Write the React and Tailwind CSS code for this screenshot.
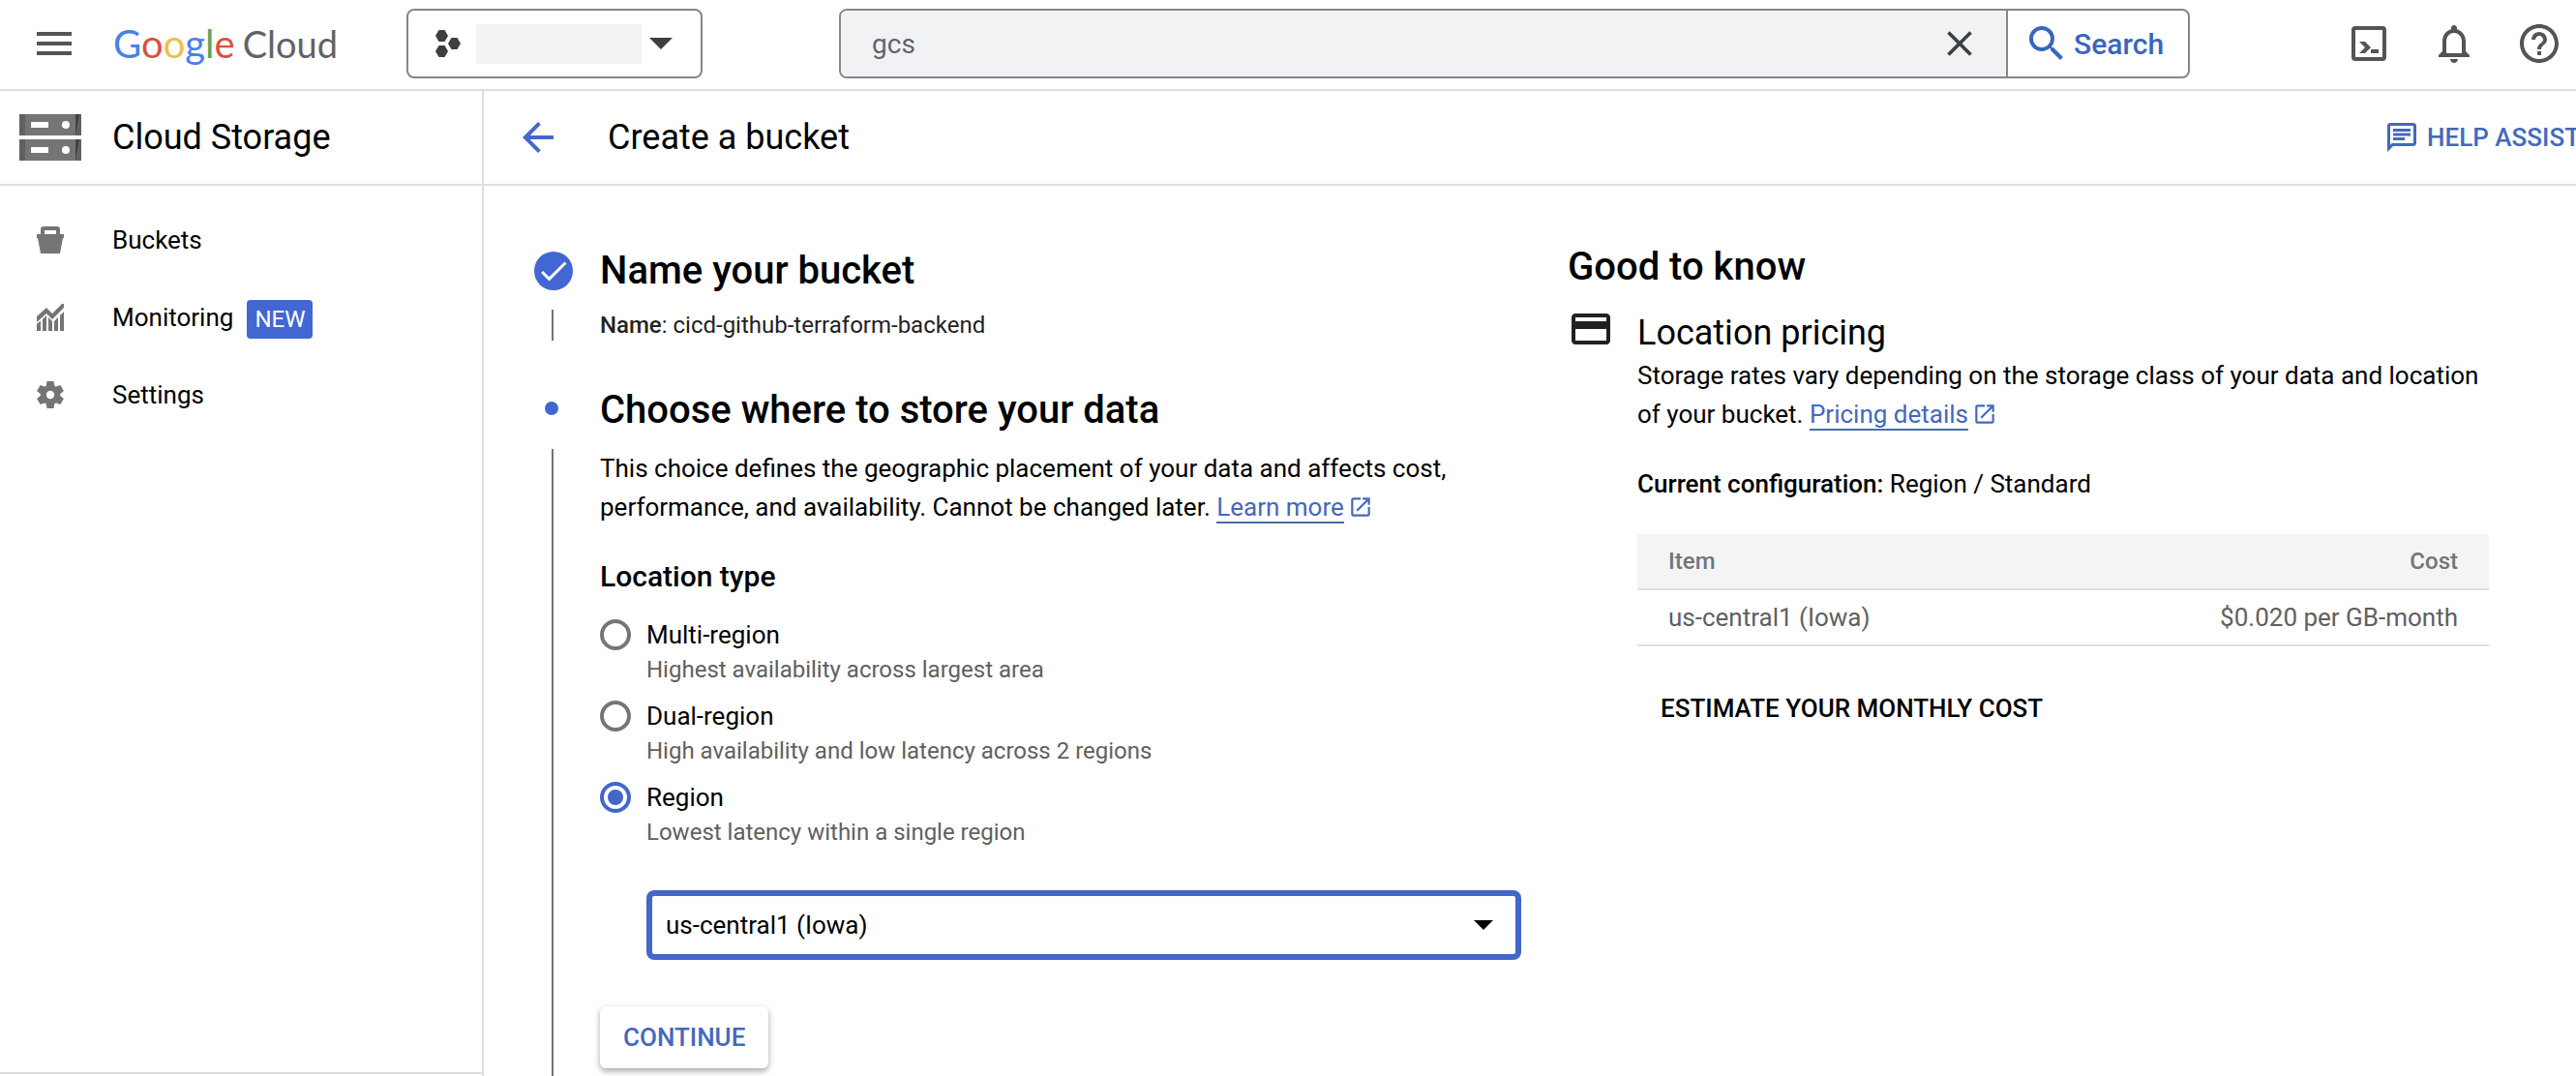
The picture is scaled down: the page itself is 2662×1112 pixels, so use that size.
import React, { useState } from "react";
import {
  MdMenu,
  MdClose,
  MdSearch,
  MdNotificationsNone,
  MdHelpOutline,
  MdArrowBack,
  MdOutlineChat,
  MdOpenInNew,
  MdCreditCard,
  MdCheck,
} from "react-icons/md";

function Caret({ className }) {
  return (
    <svg viewBox="0 0 20 10" className={className} fill="currentColor" preserveAspectRatio="none" aria-hidden="true">
      <path d="M0 0h20L10 10z" />
    </svg>
  );
}

function ProjectIcon() {
  return (
    <svg viewBox="0 0 26 28" className="h-7 w-[26px] shrink-0" fill="currentColor" aria-hidden="true">
      <path d="M3.5 0h6L13 6l-3.500 6h-6L0 6z" />
      <path d="M16.500 8h6L26 14l-3.500 6h-6L13 14z" />
      <path d="M3.500 16h6L13 22l-3.500 6h-6L0 22z" />
    </svg>
  );
}

function ShellIcon() {
  return (
    <svg viewBox="0 0 36 36" className="size-9" aria-hidden="true">
      <rect x="2" y="2" width="32" height="32" rx="2" fill="none" stroke="currentColor" strokeWidth="4" />
      <path d="M8 16h6l6 6-6 6H8l6-6zM20 24h8v4h-8z" fill="currentColor" />
    </svg>
  );
}

function StorageIcon() {
  return (
    <svg viewBox="0 0 64 48" className="h-12 w-16 shrink-0" aria-hidden="true">
      {[0, 26].map((y) => (
        <g key={y} transform={`translate(0 ${y})`}>
          <path d="M0 0h64v22H0z" fill="#757575" />
          <path d="M0 0h6v22H0z" fill="#616161" />
          <path d="M58 0h6v22h-6z" fill="#616161" />
          <path d="M58 0h4l-4 22z" fill="#424242" />
          <path d="M12 8h18v6H12z" fill="#fff" />
          <circle cx="48" cy="11" r="4" fill="#fff" />
        </g>
      ))}
    </svg>
  );
}

function BucketIcon() {
  return (
    <svg viewBox="0 0 28 28" className="size-7" fill="currentColor" aria-hidden="true">
      <path d="M0 8h4V3a3 3 0 0 1 3-3h14a3 3 0 0 1 3 3v5h4v4h-1l-3 16H4L1 12H0zM8 4v4h12V4z" fillRule="evenodd" />
    </svg>
  );
}

function MonitoringIcon() {
  return (
    <svg viewBox="0 0 28 28" className="size-7" fill="currentColor" aria-hidden="true">
      <path d="M0 13L10 4l6 6L26 0h2v4L16 16l-6-6L0 19z" />
      <path d="M0 21l4-3.500V28H0zM6 16l4-4v16H6zM12 14l4 4v10h-4zM18 18l4-4v14h-4zM24 12l4-4v20h-4z" />
    </svg>
  );
}

function GearIcon() {
  return (
    <svg viewBox="0 0 28 28" className="size-7" fill="currentColor" aria-hidden="true">
      {[0, 60, 120, 180, 240, 300].map((a) => (
        <path key={a} d="M10.500 0h7l1 6h-9z" transform={`rotate(${a} 14 14)`} />
      ))}
      <circle cx="14" cy="14" r="7.200" fill="none" stroke="currentColor" strokeWidth="6" />
    </svg>
  );
}

function GoogleCloudLogo() {
  return (
    <a href="#home" aria-label="Google Cloud" className="flex items-baseline gap-2 font-['Lato',sans-serif] whitespace-nowrap">
      <span className="text-[40px] leading-[56px]">
        <span className="text-[#4a80e8]">G</span>
        <span className="text-[#d9503f]">o</span>
        <span className="text-[#eebd4b]">o</span>
        <span className="text-[#4a80e8]">g</span>
        <span className="text-[#58a55c]">l</span>
        <span className="text-[#d9503f]">e</span>
      </span>
      <span className="text-[38px] leading-[56px] text-[#5f6368]">Cloud</span>
    </a>
  );
}

function ExternalLink({ href, children }) {
  return (
    <>
      <a href={href} className="border-b-2 border-[#4a6da7] text-[#4468bd]">
        {children}
      </a>
      <MdOpenInNew className="ml-1 inline size-[26px] align-[-4px] text-[#4468bd]" aria-hidden="true" />
    </>
  );
}

function TopBar() {
  return (
    <header className="flex h-[94px] items-center border-b-2 border-[#dedede] pb-0.5">
      <button type="button" aria-label="Navigation menu" className="ml-8 text-[#545454]">
        <MdMenu className="size-12" />
      </button>
      <div className="ml-[37px] w-[303px]">
        <GoogleCloudLogo />
      </div>
      <button
        type="button"
        aria-label="Select a project"
        className="flex h-[72px] w-[306px] items-center rounded-lg border-2 border-[#85868a] pl-7 text-[#3c4043]"
      >
        <ProjectIcon />
        <span className="ml-4 h-[41px] w-[171px] bg-[#f3f3f3]" />
        <Caret className="ml-2 h-3 w-6" />
      </button>
      <form
        role="search"
        onSubmit={(e) => e.preventDefault()}
        className="ml-[141px] flex h-[72px] max-w-[1396px] flex-1 overflow-hidden rounded-lg border-2 border-[#85868a]"
      >
        <div className="flex flex-1 items-center border-r-2 border-[#85868a] bg-[#f1f2f4] pr-[26px]">
          <input
            aria-label="Search products and resources"
            defaultValue="gcs"
            className="h-full flex-1 bg-transparent pl-8 text-[28px] text-[#636468] outline-none"
          />
          <button type="button" aria-label="Clear search" className="text-[#3c4043]">
            <MdClose className="size-11" />
          </button>
        </div>
        <button type="submit" className="flex w-[186px] items-center gap-1 pl-4 text-[30px] font-medium text-[#3a65bd]">
          <MdSearch className="size-12" aria-hidden="true" />
          Search
        </button>
      </form>
      <div className="ml-auto flex items-center gap-10 pr-[14px] text-[#545454]">
        <button type="button" aria-label="Activate Cloud Shell" className="flex size-12 items-center justify-center">
          <ShellIcon />
        </button>
        <button type="button" aria-label="Notifications">
          <MdNotificationsNone className="size-12" />
        </button>
        <button type="button" aria-label="Help">
          <MdHelpOutline className="size-12" />
        </button>
      </div>
    </header>
  );
}

function NavItem({ icon, label, badge }) {
  return (
    <li>
      <a href={`#${label.toLowerCase()}`} className="flex h-20 items-center pl-[38px]">
        <span className="w-[78px] text-[#757575]">{icon}</span>
        {label}
        {badge && (
          <span className="mt-1 ml-[14px] rounded-sm bg-[#4267d2] px-2 text-2xl leading-10 text-white">{badge}</span>
        )}
      </a>
    </li>
  );
}

function Sidebar() {
  return (
    <aside className="flex w-[500px] shrink-0 flex-col border-r-2 border-[#dedede]">
      <div className="flex h-[98px] items-center gap-8 border-b-2 border-[#dedede] pl-5">
        <StorageIcon />
        <h2 className="text-4xl">Cloud Storage</h2>
      </div>
      <nav aria-label="Cloud Storage" className="pt-4">
        <ul>
          <NavItem icon={<BucketIcon />} label="Buckets" />
          <NavItem icon={<MonitoringIcon />} label="Monitoring" badge="NEW" />
          <NavItem icon={<GearIcon />} label="Settings" />
        </ul>
      </nav>
      <div className="mt-auto h-1 border-t-2 border-[#dedede]" />
    </aside>
  );
}

const LOCATION_TYPES = [
  { id: "multi", label: "Multi-region", hint: "Highest availability across largest area" },
  { id: "dual", label: "Dual-region", hint: "High availability and low latency across 2 regions" },
  { id: "region", label: "Region", hint: "Lowest latency within a single region" },
];

function LocationTypes() {
  const [value, setValue] = useState("region");
  return (
    <fieldset className="mt-8">
      <legend className="text-[30px] leading-10 font-medium">Location type</legend>
      <div className="mt-5">
        {LOCATION_TYPES.map(({ id, label, hint }) => (
          <div key={id} className="flex h-[84px] gap-4">
            <input
              type="radio"
              name="location-type"
              id={id}
              checked={value === id}
              onChange={() => setValue(id)}
              aria-describedby={`${id}-hint`}
              className="mt-1 size-8 shrink-0 appearance-none rounded-full border-4 border-[#757575] bg-clip-content p-1 checked:border-[#4366c9] checked:bg-[#4366c9]"
            />
            <div>
              <label htmlFor={id} className="block leading-10">
                {label}
              </label>
              <p id={`${id}-hint`} className="text-2xl text-[#5f6061]">
                {hint}
              </p>
            </div>
          </div>
        ))}
      </div>
    </fieldset>
  );
}

function CreateForm() {
  return (
    <div className="flex min-w-0 flex-col">
      <section className="flex">
        <div className="flex w-[72px] shrink-0 flex-col pl-1">
          <span className="mt-5 flex size-10 items-center justify-center rounded-full bg-[#4267d2] text-white">
            <MdCheck className="size-9" aria-hidden="true" />
          </span>
          <span className="mt-5 ml-[18px] h-8 w-0.5 bg-[#757575]" />
        </div>
        <div className="pt-4">
          <h2 className="text-[40px] leading-12 font-medium">Name your bucket</h2>
          <p className="mt-4 text-2xl leading-8 text-[#222]">
            <b className="font-medium">Name</b>: cicd-github-terraform-backend
          </p>
        </div>
      </section>
      <section className="mt-12 flex flex-1">
        <div className="flex w-[72px] shrink-0 flex-col">
          <span className="mt-[15px] ml-[15px] size-[14px] rounded-full bg-[#4267d2]" />
          <span className="mt-[35px] ml-[22px] w-0.5 flex-1 bg-[#757575]" />
        </div>
        <div className="flex-1 pb-2">
          <h2 className="text-[40px] leading-12 font-medium">Choose where to store your data</h2>
          <p className="mt-4 leading-10">
            This choice defines the geographic placement of your data and affects cost, performance, and
            availability. Cannot be changed later. <ExternalLink href="#learn-more">Learn more</ExternalLink>
          </p>
          <LocationTypes />
          <div className="mt-8 ml-12 grid items-center">
            <select
              aria-label="Region"
              defaultValue="us-central1"
              className="col-start-1 row-start-1 h-[72px] w-full appearance-none rounded-lg border-6 border-[#4366c9] bg-white pl-[14px] outline-none"
            >
              <option value="us-central1">us-central1 (Iowa)</option>
            </select>
            <Caret className="pointer-events-none col-start-1 row-start-1 mr-[29px] h-[10px] w-5 justify-self-end" />
          </div>
          <button
            type="button"
            className="mt-12 h-16 rounded-md bg-white px-6 font-medium text-[#4468bd] shadow-[0_3px_6px_rgba(0,0,0,0.35)]"
          >
            CONTINUE
          </button>
        </div>
      </section>
    </div>
  );
}

function GoodToKnow() {
  return (
    <aside className="min-w-0 pt-3">
      <h2 className="text-[40px] leading-12 font-medium">Good to know</h2>
      <div className="mt-4 flex gap-6">
        <MdCreditCard className="size-12 shrink-0 text-[#202124]" aria-hidden="true" />
        <div className="flex-1 pt-1">
          <h3 className="text-4xl leading-12">Location pricing</h3>
          <p className="leading-10">
            Storage rates vary depending on the storage class of your data and location of your bucket.{" "}
            <ExternalLink href="#pricing">Pricing details</ExternalLink>
          </p>
          <p className="mt-8 leading-10">
            <b className="font-medium">Current configuration:</b> Region / Standard
          </p>
          <table className="mt-8 w-full border-separate border-spacing-0 text-left text-[#5f6061]">
            <thead className="bg-[#f4f4f4] text-2xl text-[#757575]">
              <tr>
                <th className="h-[58px] border-b-2 border-[#dedede] px-8 font-medium">Item</th>
                <th className="h-[58px] border-b-2 border-[#dedede] px-8 text-right font-medium">Cost</th>
              </tr>
            </thead>
            <tbody>
              <tr>
                <td className="h-[58px] border-b-2 border-[#dedede] px-8">us-central1 (Iowa)</td>
                <td className="h-[58px] border-b-2 border-[#dedede] px-8 text-right">$0.020 per GB-month</td>
              </tr>
            </tbody>
          </table>
          <button type="button" className="mt-8 h-16 px-6 font-medium">
            ESTIMATE YOUR MONTHLY COST
          </button>
        </div>
      </div>
    </aside>
  );
}

export default function App() {
  return (
    <div className="flex min-h-screen flex-col overflow-x-hidden bg-white font-['Roboto',sans-serif] text-[26px] text-black">
      <TopBar />
      <div className="flex flex-1">
        <Sidebar />
        <div className="flex min-w-0 flex-1 flex-col">
          <div className="flex h-[98px] items-center border-b-2 border-[#dedede] pl-8 whitespace-nowrap">
            <a href="#back" aria-label="Back" className="text-[#4468c8]">
              <MdArrowBack className="size-12" />
            </a>
            <h1 className="ml-12 text-4xl">Create a bucket</h1>
            <button type="button" className="-mr-1 ml-auto flex items-center gap-2 font-medium text-[#4468bd]">
              <MdOutlineChat className="size-9" aria-hidden="true" />
              HELP ASSIST
            </button>
          </div>
          <main className="grid flex-1 grid-cols-[1024fr_952fr] gap-12 pt-12 pr-[90px] pl-12">
            <CreateForm />
            <GoodToKnow />
          </main>
        </div>
      </div>
    </div>
  );
}
